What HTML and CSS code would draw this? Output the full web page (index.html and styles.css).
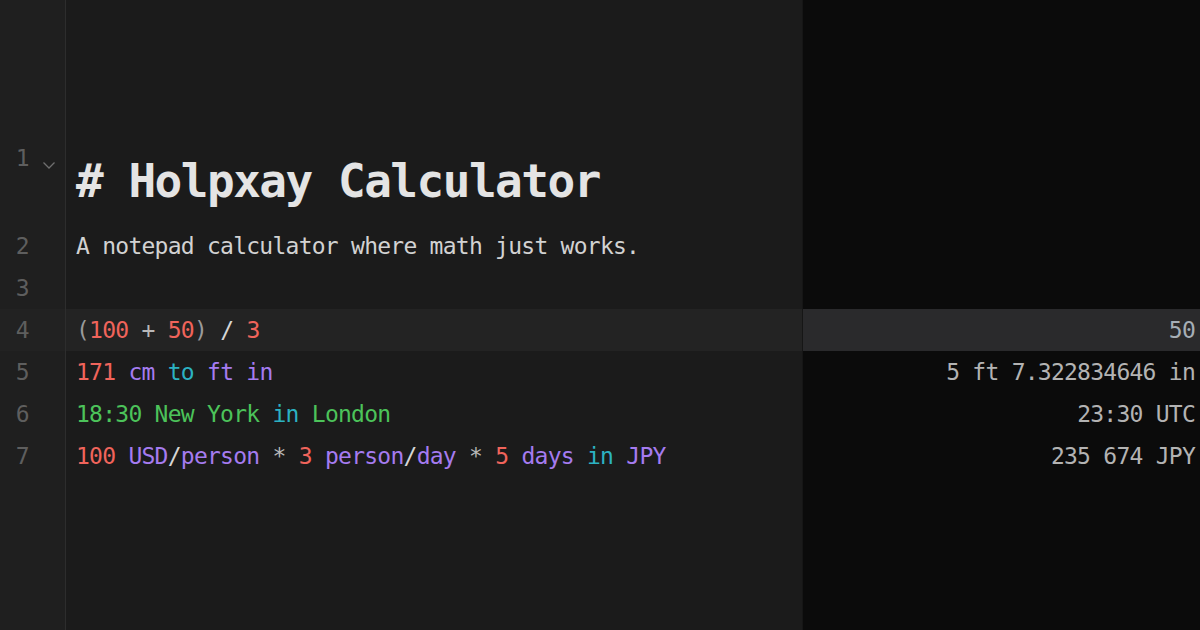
FILE: index.html
```html
<!DOCTYPE html>
<html lang="en">
<head>
<meta charset="utf-8">
<title>Holpxay Calculator</title>
<link rel="stylesheet" href="styles.css">
</head>
<body>
<div class="app">
  <div class="gutter">
    <div class="gnum gnum-h1"><span class="num">1</span><svg class="fold" width="14" height="10" viewBox="0 0 14 10"><path d="M1.5 2.5 L7 8 L12.5 2.5" fill="none" stroke="#6f6f6f" stroke-width="1.3"/></svg></div>
    <div class="gnum"><span class="num">2</span></div>
    <div class="gnum"><span class="num">3</span></div>
    <div class="gnum active"><span class="num">4</span></div>
    <div class="gnum"><span class="num">5</span></div>
    <div class="gnum"><span class="num">6</span></div>
    <div class="gnum"><span class="num">7</span></div>
  </div>
  <div class="editor">
    <div class="line h1"># Holpxay Calculator</div>
    <div class="line text">A notepad calculator where math just works.</div>
    <div class="line"></div>
    <div class="line active"><span class="p">(</span><span class="n">100</span> <span class="o">+</span> <span class="n">50</span><span class="p">)</span> <span class="s">/</span> <span class="n">3</span></div>
    <div class="line"><span class="n">171</span> <span class="u">cm</span> <span class="k">to</span> <span class="u">ft</span> <span class="u">in</span></div>
    <div class="line"><span class="g">18:30 New York</span> <span class="k">in</span> <span class="g">London</span></div>
    <div class="line"><span class="n">100</span> <span class="u">USD</span><span class="s">/</span><span class="u">person</span> <span class="o">*</span> <span class="n">3</span> <span class="u">person</span><span class="s">/</span><span class="u">day</span> <span class="o">*</span> <span class="n">5</span> <span class="u">days</span> <span class="k">in</span> <span class="u">JPY</span></div>
  </div>
  <div class="results">
    <div class="res res-h1"></div>
    <div class="res"></div>
    <div class="res"></div>
    <div class="res active">50</div>
    <div class="res">5 ft 7.322834646 in</div>
    <div class="res">23:30 UTC</div>
    <div class="res">235 674 JPY</div>
  </div>
</div>
</body>
</html>
```

FILE: styles.css
```css
html, body {
  margin: 0;
  padding: 0;
  background: #1b1b1b;
}

body {
  width: 1200px;
  height: 630px;
  overflow: hidden;
  font-family: "DejaVu Sans Mono", "Liberation Mono", monospace;
}

.app {
  display: flex;
  height: 630px;
}

.gutter {
  width: 65px;
  flex: none;
  background: #1f1f1f;
  border-right: 1px solid #2d2d2d;
  padding-top: 137px;
  box-sizing: content-box;
}

.gnum {
  height: 42px;
  line-height: 42px;
  display: flex;
  align-items: flex-start;
  font-size: 23px;
  color: #5e5e5e;
}

.gnum-h1 {
  height: 88px;
}

.gnum.active {
  background: #222222;
}

.num {
  width: 29px;
  text-align: right;
  letter-spacing: -0.5px;
}

.fold {
  margin-left: 13px;
  margin-top: 23px;
}

.editor {
  flex: 1;
  padding-top: 137px;
  background: #1b1b1b;
}

.line {
  height: 42px;
  line-height: 42px;
  padding-left: 10px;
  font-size: 23px;
  letter-spacing: -0.75px;
  color: #d2d2d2;
  white-space: pre;
}

.line.h1 {
  height: 88px;
  line-height: 88px;
  font-size: 46px;
  font-weight: bold;
  letter-spacing: -1.5px;
  color: #e4e4e4;
}

.line.active {
  background: #232323;
}

.n { color: #f0645b; }
.u { color: #a57bf0; }
.k { color: #2cb2c2; }
.g { color: #4cc35a; }
.o { color: #b8b8b8; }
.p { color: #9a9a9a; }
.s { color: #d6d6d6; }

.results {
  width: 397px;
  flex: none;
  background: #0b0b0b;
  border-left: 1px solid #161616;
  padding-top: 137px;
}

.res {
  height: 42px;
  line-height: 42px;
  padding-right: 5px;
  text-align: right;
  font-size: 23px;
  letter-spacing: -0.75px;
  color: #b3b3b3;
  white-space: pre;
}

.res-h1 {
  height: 88px;
}

.res.active {
  background: #2a2a2c;
  color: #a6aeb6;
}
```
